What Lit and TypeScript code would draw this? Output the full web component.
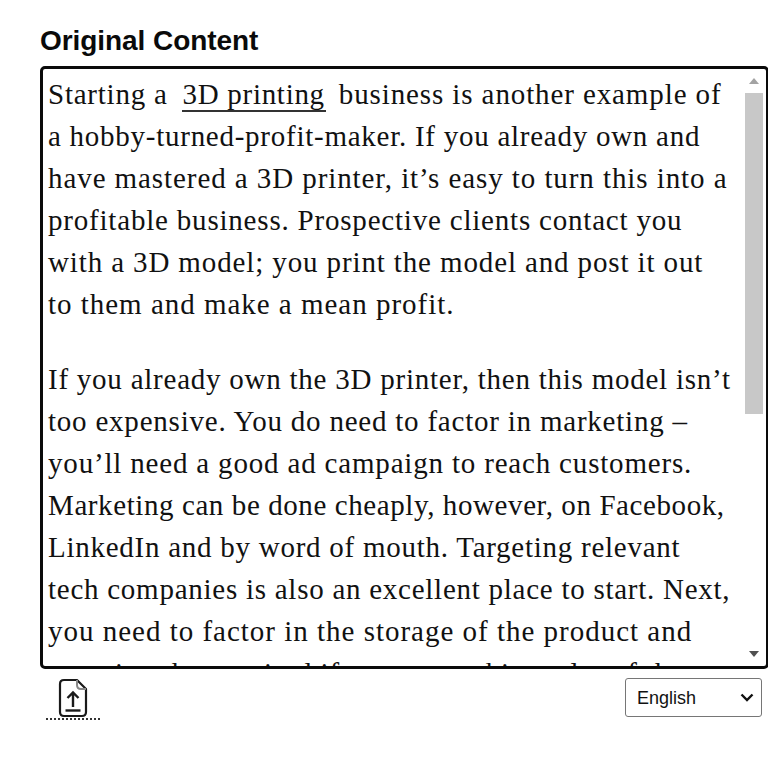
import { LitElement, html, css } from "lit";
import { customElement } from "lit/decorators.js";

type Line = [string, number];

const BASE_SPACING = 0.76;

const P1: Line[] = [
  ["a hobby-turned-profit-maker. If you already own and", -0.02],
  ["have mastered a 3D printer, it’s easy to turn this into a", 0.16],
  ["profitable business. Prospective clients contact you", 0.04],
  ["with a 3D model; you print the model and post it out", 0.115],
  ["to them and make a mean profit.", 0.22],
];
const P2: Line[] = [
  ["If you already own the 3D printer, then this model isn’t", 0],
  ["too expensive. You do need to factor in marketing –", 0.02],
  ["you’ll need a good ad campaign to reach customers.", 0.06],
  ["Marketing can be done cheaply, however, on Facebook,", -0.17],
  ["LinkedIn and by word of mouth. Targeting relevant", -0.02],
  ["tech companies is also an excellent place to start. Next,", -0.02],
  ["you need to factor in the storage of the product and", 0.23],
  ["ensuring the required if you are making a lot of the", 0.1],
];

const line = ([t, d]: Line) =>
  html`<span class="line" style="letter-spacing:${BASE_SPACING + d}px">${t}</span>`;

const CHEVRON =
  "url(\"data:image/svg+xml,%3Csvg xmlns='http://www.w3.org/2000/svg' width='14' height='9' viewBox='0 0 14 9'%3E%3Cpath d='M1.5 1.5 L7 7 L12.5 1.5' fill='none' stroke='%23111' stroke-width='2.4'/%3E%3C/svg%3E\")";

@customElement("app-root")
export class AppRoot extends LitElement {
  static styles = css`
    :host { display: block; width: 768px; height: 768px; background: #fff; overflow: hidden; box-sizing: border-box; padding: 23px 0 0 40px; }
    h1 { margin: 0 0 7px; font: bold 28px/36px "Liberation Sans", Arial, sans-serif; letter-spacing: -0.06px; color: #0a0a0a; }
    .box { box-sizing: border-box; width: 729px; height: 603px; border: 3px solid #0a0a0a; border-radius: 5px; display: flex; overflow: hidden; }
    .text { flex: 1; min-width: 0; overflow: hidden; padding: 4px 0 0 5px; font: 29px/42px "Liberation Serif", "Times New Roman", serif; letter-spacing: 0.76px; color: #111; }
    .para { margin: 0 0 33px; }
    .line { display: block; white-space: nowrap; }
    .link { color: inherit; text-decoration: none; border-bottom: 2px solid #333; padding: 0 1px 0 1px; margin: 0 5px 0 6px; letter-spacing: 0.7px; }
    .tail { letter-spacing: 0.89px; }
    .bar { width: 18px; flex: none; margin-right: 3px; display: flex; flex-direction: column; align-items: center; }
    .arrow { height: 24px; width: 18px; flex: none; display: flex; align-items: center; justify-content: center; }
    .arrow svg { display: block; }
    .thumb { width: 18px; height: 321px; background: #c8c8c8; flex: none; }
    .gap { flex: 1; }
    .foot { display: flex; justify-content: space-between; width: 722px; align-items: flex-start; margin-top: 9px; }
    .upload { margin-left: 6px; width: 54px; height: 40px; display: flex; justify-content: center; border-bottom: 2px dotted #333; }
    select { appearance: none; width: 137px; height: 39px; font: 18px "Liberation Sans", Arial, sans-serif; color: #111; border: 1px solid #767676; border-radius: 3px; padding: 0 0 0 11px; box-sizing: border-box; background: #fff ${css([CHEVRON] as unknown as TemplateStringsArray)} no-repeat right 7px center; }
  `;

  render() {
    return html`
      <h1>Original Content</h1>
      <div class="box">
        <div class="text">
          <p class="para">
            <span class="line">Starting a <a class="link">3D printing</a> <span class="tail">business is another example of</span></span>
            ${P1.map(line)}
          </p>
          <p class="para">${P2.map(line)}</p>
        </div>
        <div class="bar">
          <div class="arrow"><svg width="12" height="8" viewBox="0 0 12 8"><path d="M6 1 L11 7 H1 Z" fill="#a3a3a3"/></svg></div>
          <div class="thumb"></div>
          <div class="gap"></div>
          <div class="arrow"><svg width="12" height="8" viewBox="0 0 12 8"><path d="M1 1 H11 L6 7 Z" fill="#505050"/></svg></div>
        </div>
      </div>
      <div class="foot">
        <div class="upload">
          <svg width="30" height="40" viewBox="0 0 30 40" fill="none" stroke="#1a1a1a" stroke-width="2.2">
            <path d="M19 2 H6 Q2 2 2 6 V34 Q2 38 6 38 H24 Q28 38 28 34 V11 Z" stroke-linejoin="round"/>
            <path d="M19 2 V7 Q19 11 23 11 H28" stroke="#888" stroke-width="2"/>
            <path d="M15 29 V15 M9.5 20 L15 14.5 L20.5 20" stroke-width="2.4"/>
            <path d="M7.5 32.5 H22.5" stroke-width="2.4"/>
          </svg>
        </div>
        <select><option>English</option></select>
      </div>
    `;
  }
}
